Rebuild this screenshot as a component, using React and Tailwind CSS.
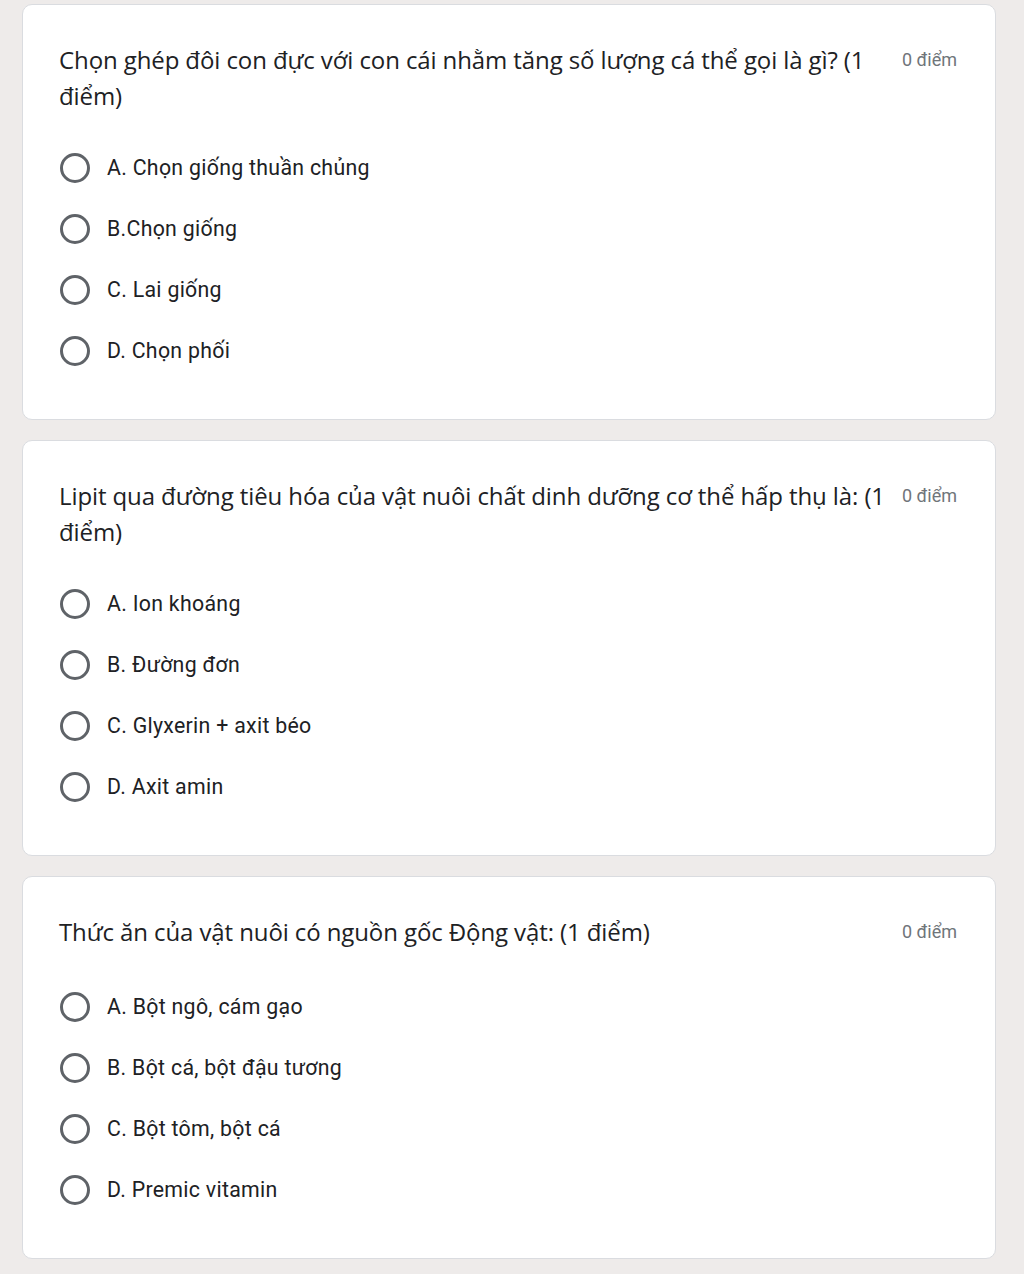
import React from "react";

const questions = [
  {
    q: "Chọn ghép đôi con đực với con cái nhằm tăng số lượng cá thể gọi là gì? (1 điểm)",
    opts: ["A. Chọn giống thuần chủng", "B.Chọn giống", "C. Lai giống", "D. Chọn phối"],
    mb: "mb-[23px]",
  },
  {
    q: "Lipit qua đường tiêu hóa của vật nuôi chất dinh dưỡng cơ thể hấp thụ là: (1 điểm)",
    opts: ["A. Ion khoáng", "B. Đường đơn", "C. Glyxerin + axit béo", "D. Axit amin"],
    mb: "mb-[23px]",
  },
  {
    q: "Thức ăn của vật nuôi có nguồn gốc Động vật: (1 điểm)",
    opts: ["A. Bột ngô, cám gạo", "B. Bột cá, bột đậu tương", "C. Bột tôm, bột cá", "D. Premic vitamin"],
    mb: "mb-[26px]",
  },
];

function Card({ q, opts, mb }) {
  return (
    <div className="w-[974px] rounded-[10px] border border-[#dadce0] bg-white pl-[36px] pr-[38px] pt-[37px] pb-[38px]">
      <div className={`flex items-start justify-between ${mb}`}>
        <div
          className="w-[842px] text-[24px] leading-[36px] tracking-[-0.1px] text-[#202124]"
          style={{ fontFamily: '"Open Sans", "Noto Sans", sans-serif' }}
        >
          {q}
        </div>
        <div
          className="mt-[6px] whitespace-nowrap text-[18px] leading-[24px] text-[#70757a]"
          style={{ fontFamily: 'Roboto, "Noto Sans", sans-serif' }}
        >
          0 điểm
        </div>
      </div>
      <div className="flex flex-col">
        {opts.map((o) => (
          <div key={o} className="flex h-[61px] items-center">
            <div className="ml-[1px] h-[30px] w-[30px] shrink-0 rounded-full border-[3px] border-[#5f6368]" />
            <div
              className="ml-[17px] text-[21.3px] leading-[28px] tracking-[0.3px] text-[#202124]"
              style={{ fontFamily: 'Roboto, "Noto Sans", sans-serif' }}
            >
              {o}
            </div>
          </div>
        ))}
      </div>
    </div>
  );
}

export default function App() {
  return (
    <div className="min-h-[1274px] w-[1024px] bg-[#eeebea] pl-[22px] pt-[4px]">
      <div className="flex flex-col gap-[20px]">
        {questions.map((item, i) => (
          <Card key={i} {...item} />
        ))}
      </div>
    </div>
  );
}
